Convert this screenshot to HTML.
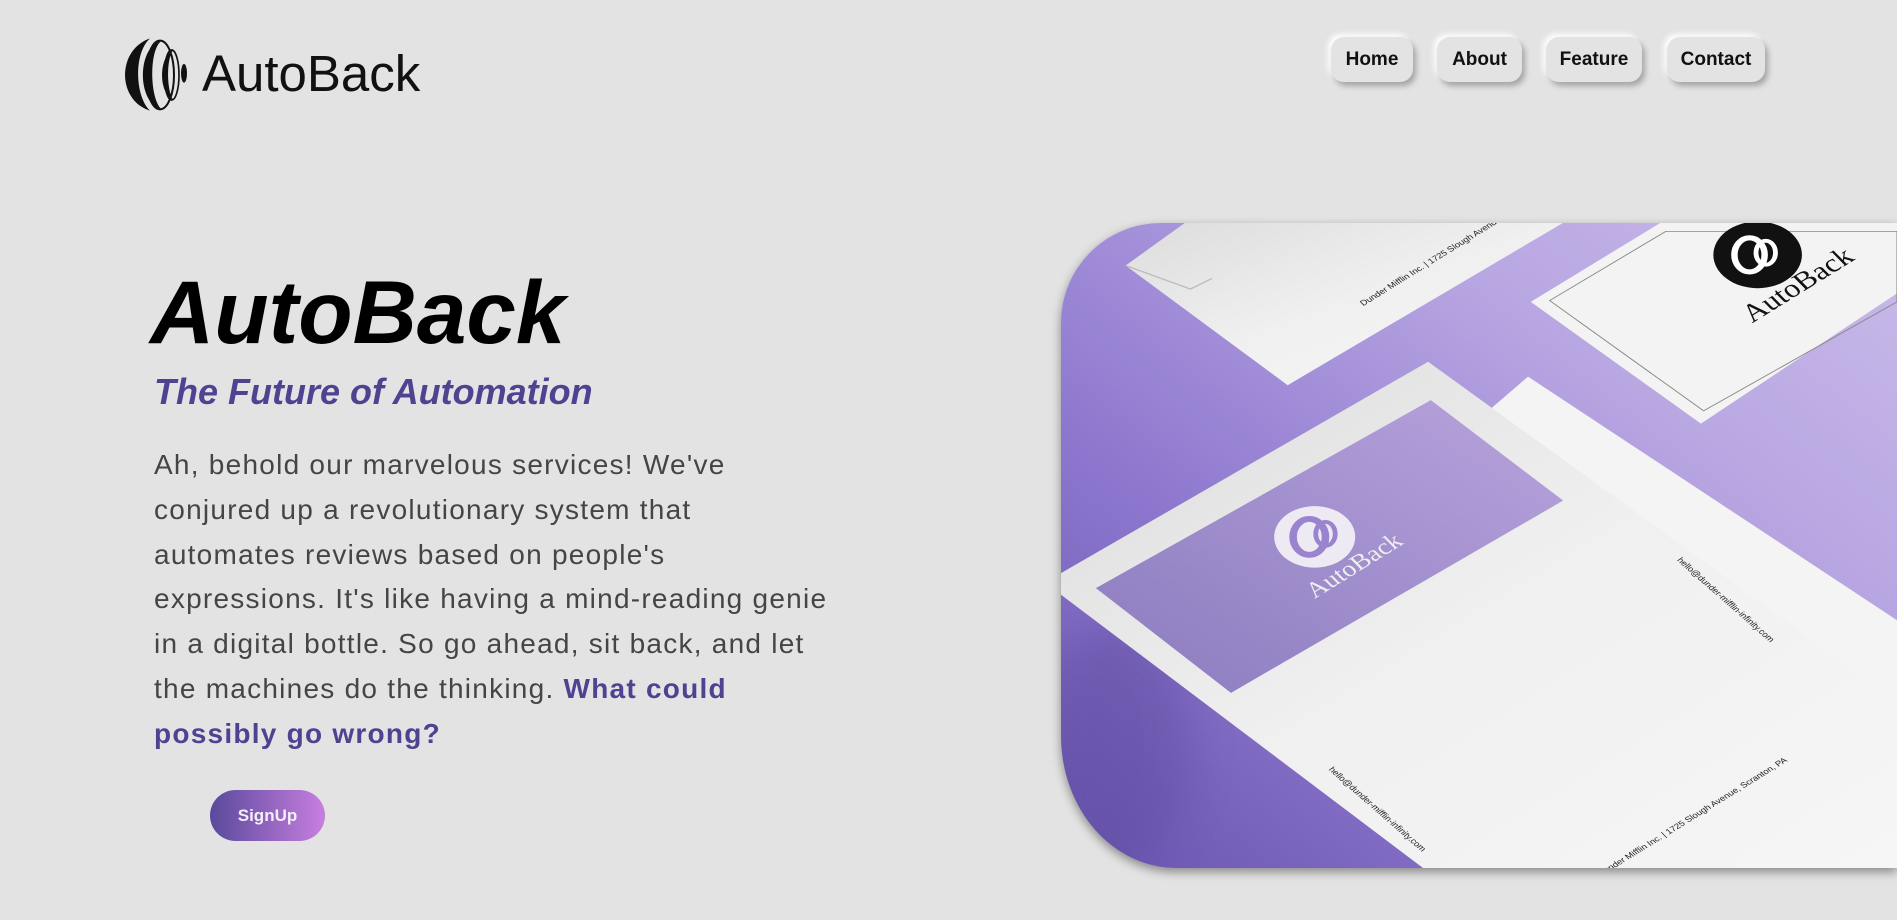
<!DOCTYPE html>
<html><head><meta charset="utf-8"><style>
html,body{margin:0;padding:0;}
body{width:1897px;height:920px;background:#e3e3e3;position:relative;overflow:hidden;font-family:"Liberation Sans",sans-serif;}
.logo-text{position:absolute;left:202px;top:44px;font-size:51px;color:#111;letter-spacing:0px;font-weight:300;}
.nav{position:absolute;top:37px;height:45px;line-height:45px;background:#e3e3e3;border-radius:13px;font-weight:bold;font-size:19px;color:#111;text-align:center;box-shadow:3px 4px 6px rgba(0,0,0,.28),-3px -3px 6px #fff;}
h1{position:absolute;left:150px;top:262px;margin:0;font-size:89px;font-style:italic;font-weight:bold;color:#000;line-height:100px;}
h2{position:absolute;left:154px;top:370px;margin:0;font-size:36px;font-style:italic;font-weight:bold;color:#4f4391;line-height:44px;}
.body{position:absolute;left:154px;top:443px;font-size:28px;letter-spacing:1.25px;line-height:44.8px;color:#454545;white-space:nowrap;}
.body b{color:#4f4391;}
.btn{position:absolute;left:210px;top:790px;width:115px;height:51px;border-radius:26px;background:linear-gradient(90deg,#5a4a9c,#c87ee0);color:#f4eefa;font-weight:bold;font-size:17px;line-height:51px;text-align:center;}
.img{position:absolute;left:1061px;top:223px;width:836px;height:645px;border-radius:100px 0 0 115px/100px 0 0 132px;overflow:hidden;box-shadow:0 4px 10px rgba(0,0,0,.4);}
.img svg{position:absolute;left:-11px;top:-13px;}
</style></head><body>
<svg style="position:absolute;left:100px;top:20px" width="350" height="110" viewBox="0 0 1050 330">
<path d="M150,55 C50,90 50,240 150,272 C105,230 100,100 150,55 Z" fill="#111"/>
<path d="M185,62 C110,80 110,250 185,268 C150,240 145,90 185,62 Z" fill="#111"/>
<ellipse cx="180" cy="165" rx="42" ry="103" fill="none" stroke="#111" stroke-width="6"/>
<path d="M220,90 C175,110 175,220 220,240 C200,215 198,115 220,90 Z" fill="#111"/>
<ellipse cx="215" cy="165" rx="22" ry="75" fill="none" stroke="#111" stroke-width="5"/>
<ellipse cx="252" cy="160" rx="9" ry="28" fill="#111"/>
</svg>
<div class="logo-text">AutoBack</div>
<div class="nav" style="left:1331px;width:82px">Home</div>
<div class="nav" style="left:1437px;width:85px">About</div>
<div class="nav" style="left:1546px;width:96px">Feature</div>
<div class="nav" style="left:1667px;width:98px">Contact</div>
<h1>AutoBack</h1>
<h2>The Future of Automation</h2>
<div class="body">Ah, behold our marvelous services! We've<br>conjured up a revolutionary system that<br>automates reviews based on people's<br>expressions. It's like having a mind-reading genie<br>in a digital bottle. So go ahead, sit back, and let<br>the machines do the thinking. <b>What could<br>possibly go wrong?</b></div>
<div class="btn">SignUp</div>
<div class="img">
<svg width="847" height="670" viewBox="0 0 1568 1568" preserveAspectRatio="none">
<defs>
<linearGradient id="bg" x1="0" y1="1" x2="1" y2="0">
<stop offset="0" stop-color="#6752ad"/><stop offset="0.35" stop-color="#8e78cf"/><stop offset="0.7" stop-color="#b8a6e2"/><stop offset="1" stop-color="#c9bbe9"/></linearGradient>
<linearGradient id="band" x1="0" y1="1" x2="1" y2="0">
<stop offset="0" stop-color="#8b7bbf"/><stop offset="1" stop-color="#b8a3dc"/></linearGradient>
<linearGradient id="paper" x1="0" y1="0" x2="1" y2="1">
<stop offset="0" stop-color="#dcdcdc"/><stop offset="0.5" stop-color="#f0f0f0"/><stop offset="1" stop-color="#f6f6f6"/></linearGradient>
<filter id="bl" x="-100%" y="-100%" width="300%" height="300%"><feGaussianBlur stdDeviation="40"/></filter>
</defs>
<rect width="1568" height="1568" fill="url(#bg)"/>
<ellipse cx="120" cy="1250" rx="140" ry="280" fill="#5a4799" opacity=".35" filter="url(#bl)"/>
<polygon points="140,130 250,30 950,30 440,410" fill="url(#paper)"/>
<polyline points="140,130 260,185 300,160" fill="none" stroke="#bbb" stroke-width="3"/>
<text x="580" y="225" font-size="18" transform="rotate(-38 580 225)" fill="#222" font-family="Liberation Sans">Dunder Mifflin Inc.  |  1725 Slough Avenue, Scr</text>
<polygon points="890,215 1130,30 1568,30 1568,195 1205,500" fill="#f3f3f3"/>
<polygon points="925,212 1140,50 1568,50 1568,215 1210,470" fill="none" stroke="#888" stroke-width="2"/>
<ellipse cx="1310" cy="105" rx="82" ry="78" fill="#111"/>
<ellipse cx="1295" cy="105" rx="28" ry="40" fill="none" stroke="#fff" stroke-width="12"/>
<ellipse cx="1325" cy="100" rx="18" ry="28" fill="none" stroke="#fff" stroke-width="9"/>
<text x="1300" y="265" font-size="60" transform="rotate(-38 1300 265)" fill="#111" font-family="Liberation Serif">AutoBack</text>
<polygon points="885,390 1568,960 1568,1568 760,1568 600,700" fill="#f4f4f4"/>
<polygon points="20,850 700,355 1568,1150 1568,1568 720,1568 20,900" fill="url(#paper)"/>
<polygon points="85,885 705,445 950,680 335,1130" fill="url(#band)"/>
<ellipse cx="490" cy="765" rx="75" ry="72" fill="#eeeaf4"/>
<ellipse cx="480" cy="765" rx="30" ry="42" fill="none" stroke="#9a84cf" stroke-width="14"/>
<ellipse cx="510" cy="758" rx="18" ry="28" fill="none" stroke="#9a84cf" stroke-width="9"/>
<text x="490" y="910" font-size="52" transform="rotate(-38 490 910)" fill="#eee" font-family="Liberation Serif">AutoBack</text>
<text x="1160" y="820" font-size="18" transform="rotate(48 1160 820)" fill="#222" font-family="Liberation Sans">hello@dunder-mifflin-infinity.com</text>
<text x="515" y="1310" font-size="18" transform="rotate(48 515 1310)" fill="#222" font-family="Liberation Sans">hello@dunder-mifflin-infinity.com</text>
<text x="1020" y="1560" font-size="18" transform="rotate(-38 1020 1560)" fill="#222" font-family="Liberation Sans">Dunder Mifflin Inc.  |  1725 Slough Avenue, Scranton, PA</text>
</svg>
</div>
</body></html>
